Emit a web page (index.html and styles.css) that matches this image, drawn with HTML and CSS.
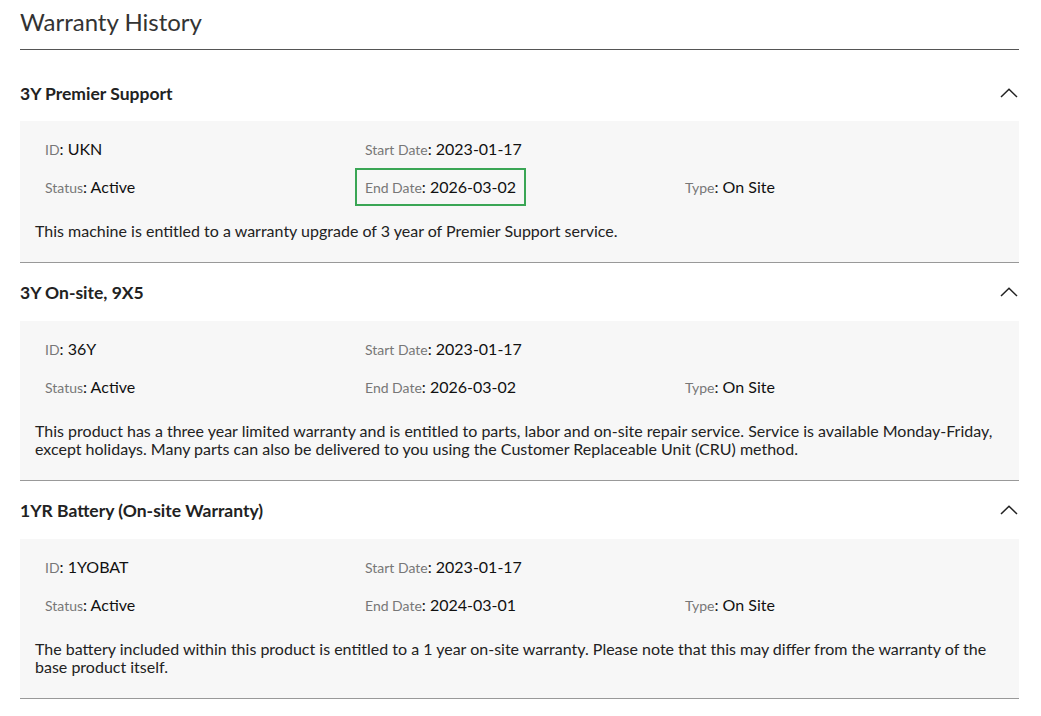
FILE: index.html
```html
<!DOCTYPE html>
<html>
<head lang="en">
    <meta charset="UTF-8">
    <title>Warranty History</title>
    <link rel="stylesheet" href="styles.css">
</head>
<body>
<div class="page">
    <h1 class="title">Warranty History</h1>
    <div class="list">

        <div class="item">
            <div class="item-head">
                <span>3Y Premier Support</span>
                <svg class="chevron" width="18" height="10" viewBox="0 0 18 10"><polyline points="1,9 9,1.2 17,9" fill="none" stroke="#222" stroke-width="1.5"/></svg>
            </div>
            <div class="panel">
                <div class="grid">
                    <div class="cell"><span class="label">ID</span>: UKN</div>
                    <div class="cell"><span class="label">Start Date</span>: 2023-01-17</div>
                    <div class="cell"></div>
                    <div class="cell"><span class="label">Status</span>: Active</div>
                    <div class="cell mark"><span class="label">End Date</span>: 2026-03-02</div>
                    <div class="cell"><span class="label">Type</span>: On Site</div>
                </div>
                <p class="desc">This machine is entitled to a warranty upgrade of 3 year of Premier Support service.</p>
            </div>
        </div>

        <div class="item">
            <div class="item-head">
                <span>3Y On-site, 9X5</span>
                <svg class="chevron" width="18" height="10" viewBox="0 0 18 10"><polyline points="1,9 9,1.2 17,9" fill="none" stroke="#222" stroke-width="1.5"/></svg>
            </div>
            <div class="panel">
                <div class="grid">
                    <div class="cell"><span class="label">ID</span>: 36Y</div>
                    <div class="cell"><span class="label">Start Date</span>: 2023-01-17</div>
                    <div class="cell"></div>
                    <div class="cell"><span class="label">Status</span>: Active</div>
                    <div class="cell"><span class="label">End Date</span>: 2026-03-02</div>
                    <div class="cell"><span class="label">Type</span>: On Site</div>
                </div>
                <p class="desc">This product has a three year limited warranty and is entitled to parts, labor and on-site repair service. Service is available Monday-Friday, except holidays. Many parts can also be delivered to you using the Customer Replaceable Unit (CRU) method.</p>
            </div>
        </div>

        <div class="item">
            <div class="item-head">
                <span>1YR Battery (On-site Warranty)</span>
                <svg class="chevron" width="18" height="10" viewBox="0 0 18 10"><polyline points="1,9 9,1.2 17,9" fill="none" stroke="#222" stroke-width="1.5"/></svg>
            </div>
            <div class="panel">
                <div class="grid">
                    <div class="cell"><span class="label">ID</span>: 1YOBAT</div>
                    <div class="cell"><span class="label">Start Date</span>: 2023-01-17</div>
                    <div class="cell"></div>
                    <div class="cell"><span class="label">Status</span>: Active</div>
                    <div class="cell"><span class="label">End Date</span>: 2024-03-01</div>
                    <div class="cell"><span class="label">Type</span>: On Site</div>
                </div>
                <p class="desc">The battery included within this product is entitled to a 1 year on-site warranty. Please note that this may differ from the warranty of the base product itself.</p>
            </div>
        </div>

    </div>
</div>
</body>
</html>
```

FILE: styles.css
```css
*{
    padding: 0;
    margin: 0;
}
body{
    font-family: Lato, "Liberation Sans", sans-serif;
    color: #111;
    background: #fff;
}
.page{
    width: 999px;
    padding: 7px 0 0 20px;
}
.title{
    font-size: 24px;
    font-weight: 400;
    line-height: 30px;
    color: #333;
    padding-bottom: 12px;
    border-bottom: 1px solid #555;
}
.list{
    padding-top: 13px;
}
.item-head{
    display: flex;
    justify-content: space-between;
    align-items: center;
    height: 58px;
    font-size: 17.5px;
    font-weight: 700;
    color: #222;
}
.item:first-child .item-head{
    padding-top: 2px;
    height: 56px;
}
.chevron{
    margin-right: 1px;
}
.panel{
    background-color: #f7f7f7;
    padding: 9px 15px 22px;
    border-bottom: 1px solid #999;
}
.grid{
    display: grid;
    grid-template-columns: 320px 320px 320px;
}
.cell{
    padding: 10px;
    height: 18px;
    line-height: 18px;
    font-size: 16px;
    color: #111;
    white-space: nowrap;
}
.label{
    font-size: 14px;
    color: #777;
}
.mark{
    justify-self: start;
    border: 2px solid #3aa655;
    padding: 8px;
}
.desc{
    margin-top: 16px;
    font-size: 16px;
    line-height: 18px;
    color: #222;
}
```
